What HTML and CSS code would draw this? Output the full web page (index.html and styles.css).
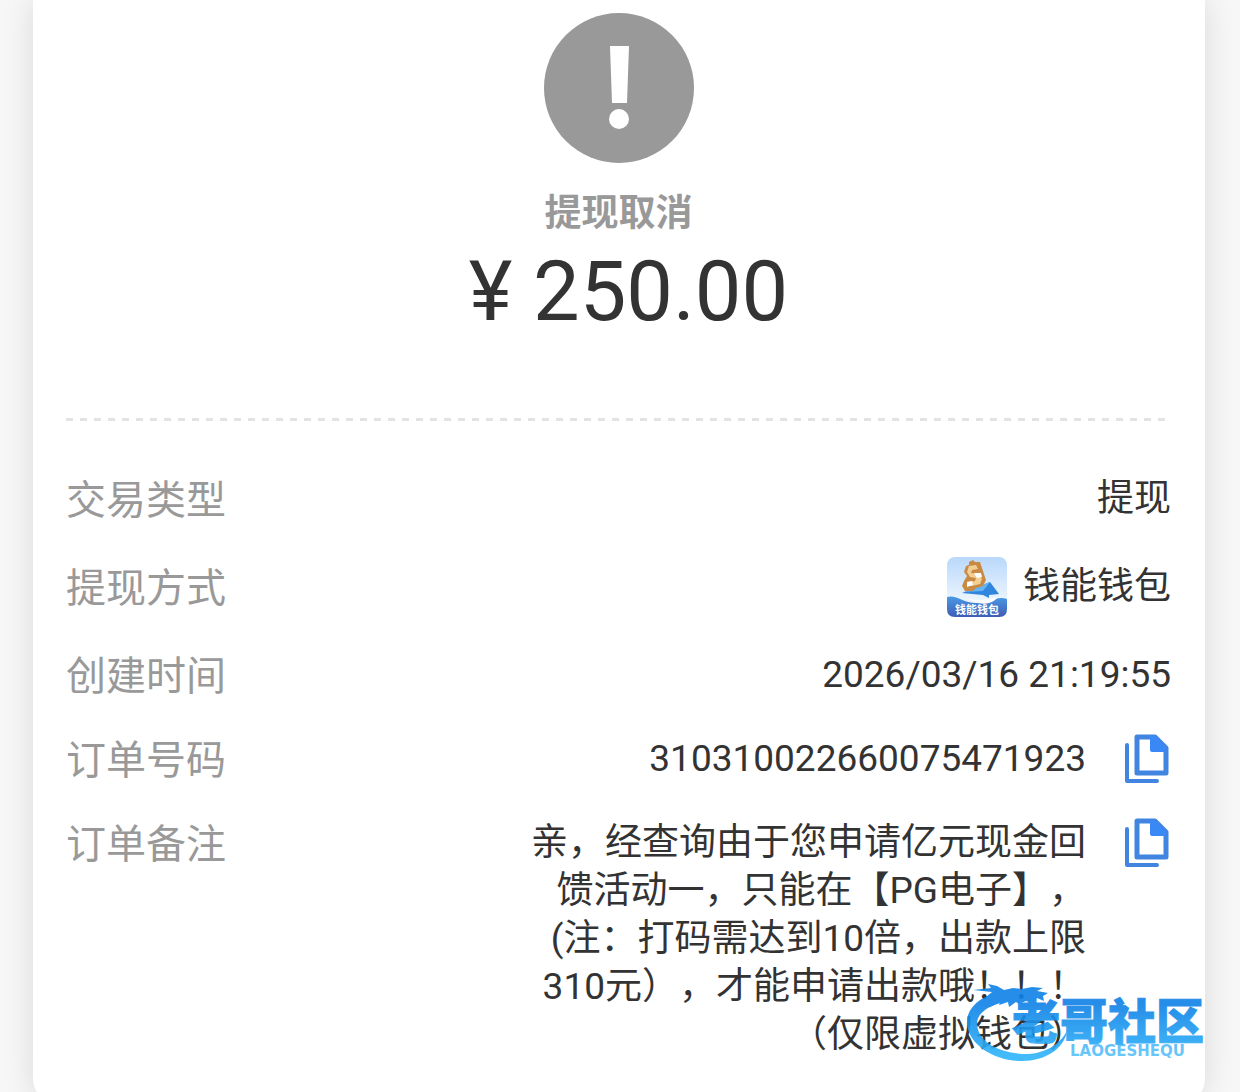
FILE: index.html
```
<!DOCTYPE html>
<html lang="zh-CN">
<head>
    <meta charset="UTF-8">
    <meta name="viewport" content="width=device-width, initial-scale=1.0">
    <title>提现详情</title>
    <link rel="stylesheet" href="styles.css">
</head>
<body>
    <div class="page">
        <main class="card">
            <header class="summary">
                <svg class="status-icon" viewBox="0 0 150 150" aria-hidden="true">
                    <circle cx="75" cy="75" r="75" fill="#999"/>
                    <path d="M66 33H85L83 90H68Z" fill="#fff"/>
                    <circle cx="75" cy="106" r="10" fill="#fff"/>
                </svg>
                <h1 class="status">提现取消</h1>
                <p class="amount">¥ 250.00</p>
            </header>

            <dl class="details">
                <div class="row">
                    <dt>交易类型</dt>
                    <dd>提现</dd>
                </div>
                <div class="row">
                    <dt>提现方式</dt>
                    <dd class="method">
                        <svg class="wallet" viewBox="0 0 60 60" aria-hidden="true">
                            <defs>
                                <linearGradient id="sky" x1="0" y1="0" x2="0" y2="1">
                                    <stop offset="0" stop-color="#b9d8fb"/>
                                    <stop offset="0.7" stop-color="#eaf4fe"/>
                                </linearGradient>
                                <linearGradient id="sea" x1="0" y1="0" x2="0" y2="1">
                                    <stop offset="0" stop-color="#4a9ae6"/>
                                    <stop offset="1" stop-color="#3e5cb4"/>
                                </linearGradient>
                            </defs>
                            <rect width="60" height="60" rx="8" fill="url(#sky)"/>
                            <path d="M15 36L43 25L52 37L42 38V41L36 38Z" fill="#2f86dc"/>
                            <path d="M17 35L43 25L36 34Z" fill="#63b4f2"/>
                            <path d="M22 5L26 3L28 5L33 5L35 11L37 17L39 23L36 29L29 31L26 34L18 34L15 29L17 24L20 19L17 15L19 9L22 8Z" fill="#c98a45"/>
                            <path d="M22 9L29 8L31 12L25 13L24 16L32 17L35 22L33 27L25 29L20 27L21 25L28 24L29 21L23 20L20 15Z" fill="#f3cf93"/>
                            <path d="M27 16L34 16L35 20L30 21ZM20 25L25 24L26 28L20 30Z" fill="#fff"/>
                            <path d="M0 40C9 37 16 46 29 46C42 47 49 38 60 42V52Q60 60 52 60H8Q0 60 0 52Z" fill="url(#sea)"/>
                            <path d="M21 42Q33 45 51 40Q44 49 31 46Z" fill="#fff"/>
                            <text x="30" y="57" class="wallet-text">钱能钱包</text>
                        </svg>
                        <span>钱能钱包</span>
                    </dd>
                </div>
                <div class="row">
                    <dt>创建时间</dt>
                    <dd>2026/03/16 21:19:55</dd>
                </div>
                <div class="row row-copy">
                    <dt>订单号码</dt>
                    <dd>310310022660075471923</dd>
                    <dd class="action">
                        <button class="copy" type="button" aria-label="复制订单号码">
                            <svg viewBox="0 0 46 50" aria-hidden="true">
                                <path d="M2 11V47H32" fill="none" stroke="#4285e0" stroke-width="4" stroke-linecap="round" stroke-linejoin="round"/>
                                <path d="M12 3H30L41 14V39H12Z" fill="#fff" stroke="#4285e0" stroke-width="5" stroke-linejoin="round"/>
                                <path d="M25 2H30L41 13V18H27Q25 18 25 16Z" fill="#3a88f5"/>
                            </svg>
                        </button>
                    </dd>
                </div>
                <div class="row row-copy">
                    <dt>订单备注</dt>
                    <dd class="note">亲，经查询由于您申请亿元现金回<br>馈活动一，只能在【PG电子】，<br>(注：打码需达到10倍，出款上限<br>310元），才能申请出款哦！！！<br>（仅限虚拟钱包）</dd>
                    <dd class="action">
                        <button class="copy" type="button" aria-label="复制订单备注">
                            <svg viewBox="0 0 46 50" aria-hidden="true">
                                <path d="M2 11V47H32" fill="none" stroke="#4285e0" stroke-width="4" stroke-linecap="round" stroke-linejoin="round"/>
                                <path d="M12 3H30L41 14V39H12Z" fill="#fff" stroke="#4285e0" stroke-width="5" stroke-linejoin="round"/>
                                <path d="M25 2H30L41 13V18H27Q25 18 25 16Z" fill="#3a88f5"/>
                            </svg>
                        </button>
                    </dd>
                </div>
            </dl>
        </main>

        <!-- community logo over the card corner -->
        <svg class="watermark" viewBox="0 0 256 84" role="img" aria-label="老哥社区">
            <defs>
                <linearGradient id="blue" gradientUnits="userSpaceOnUse" x1="0" y1="0" x2="0" y2="84">
                    <stop offset="0.3" stop-color="#0f82e6"/>
                    <stop offset="0.9" stop-color="#2fb4fa"/>
                </linearGradient>
            </defs>
            <g fill="url(#blue)">
                <path d="M22 16C9 21 0 32 1 44C3 65 28 81 56 81C79 81 98 69 101 51C93 66 76 75 56 74C32 72 12 62 11 44C11 33 22 26 38 22Z"/>
                <path d="M7 10L25 8L22 4L31 6L38 10L47 8L56 9L66 7L77 8L71 11L82 13L77 16L78 21L71 18L66 23L60 21L53 24L50 22L43 27L42 22L33 25L34 22L24 27L20 17L26 12Z"/>
                <text x="46" y="59" class="logo-name">老哥社区</text>
                <text x="104" y="76" class="logo-latin">LAOGESHEQU</text>
            </g>
        </svg>
    </div>
</body>
</html>
```
FILE: styles.css
```
* {
    box-sizing: border-box;
}
html {
    scrollbar-width: none;
}
body {
    margin: 0;
    background: #f7f7f7;
    color: #333;
    font-family: Roboto, "Noto Sans CJK SC", sans-serif;
    font-size: 37px;
    line-height: 48px;
    text-spacing-trim: space-all;
}
.page {
    position: relative;
    padding: 0 35px 0 33px;
}
.card {
    background: #fff;
    border-radius: 0 0 24px 24px;
    box-shadow: 0 0 32px rgba(0, 0, 0, 0.12);
    padding: 13px 34px 44px 33px;
}
.summary {
    display: flex;
    flex-direction: column;
    align-items: center;
    padding-bottom: 81px;
    background: repeating-linear-gradient(90deg, #e3e3e3 0 7px, transparent 7px 14px) left bottom / 100% 3px no-repeat;
}
.status-icon {
    width: 150px;
    height: 150px;
}
.status {
    margin: 27px 0 0;
    color: #999;
    font-size: 37px;
    font-weight: bold;
}
.amount {
    margin: 6px 0 0;
    padding-left: 20px;
    font-size: 83px;
    line-height: 96px;
}
.details {
    display: flex;
    flex-direction: column;
    gap: 24px;
    margin: 46px 0 0;
}
.row {
    display: flex;
    justify-content: space-between;
    align-items: flex-start;
    line-height: 64px;
}
.row-copy {
    margin-top: -4px;
}
dt {
    flex: 1;
    margin-bottom: -2px;
    padding-top: 2px;
    color: #999;
    font-size: 40px;
}
dd {
    margin: 0;
    text-align: right;
}
.method {
    display: flex;
    align-items: center;
    gap: 16px;
}
.wallet {
    width: 60px;
    height: 60px;
}
.wallet-text {
    fill: #fff;
    font-size: 11px;
    font-weight: bold;
    text-anchor: middle;
}
.note {
    padding-top: 8px;
    line-height: 48px;
}
.action {
    display: flex;
    padding: 7px 0 7px 39px;
}
.copy {
    width: 46px;
    height: 50px;
    padding: 0;
    border: none;
    background: none;
    cursor: pointer;
}
.copy svg {
    display: block;
}
.watermark {
    position: absolute;
    right: 18px;
    bottom: 39px;
    width: 256px;
    height: 84px;
    opacity: 0.9;
}
.logo-name {
    font-size: 48px;
    font-weight: 900;
    stroke: url(#blue);
    stroke-width: 1px;
}
.logo-latin {
    font-family: "DejaVu Sans", sans-serif;
    font-size: 15px;
    font-weight: bold;
    opacity: 0.8;
}
```
